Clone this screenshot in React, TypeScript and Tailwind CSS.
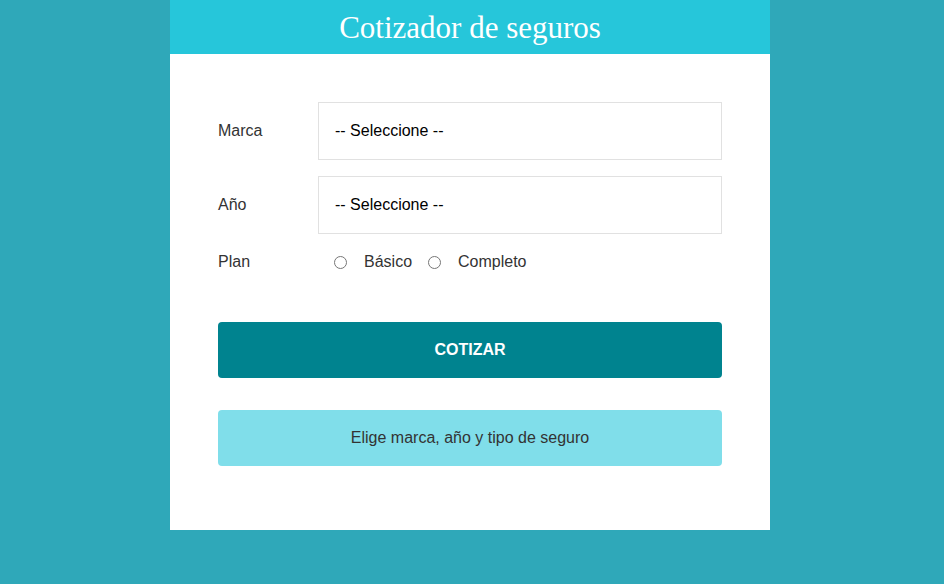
import React from "react";

const sans = { fontFamily: '"Liberation Sans", Arial, sans-serif' };

export default function App() {
  return (
    <div className="min-h-[584px] w-full bg-[#2fa8b9]" style={sans}>
      <div className="ml-[170px] w-[600px]">
        <header className="flex h-[54px] items-center justify-center bg-[#26c6da]">
          <h1 className="text-[31px] leading-none text-white [font-family:'Liberation_Serif',serif]">
            Cotizador de seguros
          </h1>
        </header>
        <div className="bg-white px-12 pt-12 pb-16">
          <form onSubmit={(e) => e.preventDefault()}>
            <div className="mb-4 flex items-center">
              <label className="w-[100px] text-base text-[#333]">Marca</label>
              <div className="flex h-[58px] flex-1 items-center border border-[#e1e1e1] px-4 text-base text-black">
                -- Seleccione --
              </div>
            </div>
            <div className="mb-4 flex items-center">
              <label className="w-[100px] text-base text-[#333]">Año</label>
              <div className="flex h-[58px] flex-1 items-center border border-[#e1e1e1] px-4 text-base text-black">
                -- Seleccione --
              </div>
            </div>
            <div className="flex h-6 items-center">
              <label className="w-[100px] text-base text-[#333]">Plan</label>
              <input type="radio" name="plan" className="m-0 ml-4 h-[13px] w-[13px]" />
              <span className="ml-[17px] text-base text-[#333]">Básico</span>
              <input type="radio" name="plan" className="m-0 ml-4 h-[13px] w-[13px]" />
              <span className="ml-[17px] text-base text-[#333]">Completo</span>
            </div>
            <button
              type="submit"
              className="mt-12 flex h-14 w-full items-center justify-center rounded bg-[#00838f] text-base font-bold uppercase text-white"
            >
              Cotizar
            </button>
          </form>
          <div className="mt-8 flex h-14 items-center justify-center rounded bg-[#80deea] text-base text-[#333]">
            Elige marca, año y tipo de seguro
          </div>
        </div>
      </div>
    </div>
  );
}
